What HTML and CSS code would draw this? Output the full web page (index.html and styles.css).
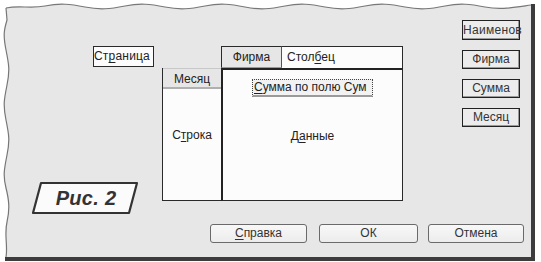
FILE: index.html
```html
<!DOCTYPE html>
<html lang="ru">
<head>
<meta charset="utf-8">
<title>Макет сводной таблицы</title>
<link rel="stylesheet" href="styles.css">
</head>
<body>
<div class="sheet">
  <svg class="paper" width="541" height="262" viewBox="0 0 541 262" aria-hidden="true">
    <path class="paper-fill" d="M6 8 C 20 5, 30 9, 45 6 S 70 4, 85 7 S 110 9, 125 6 S 150 4, 165 7 S 190 9, 205 6 S 230 4, 245 7 S 270 9, 285 6 S 310 4, 325 7 S 350 9, 365 6 S 390 4, 405 7 S 430 9, 445 6 S 470 4, 485 7 S 510 8, 531 5 L 531 257 L 6 257 C 8 245, 4 235, 7 222 S 9 200, 6 188 S 4 170, 7 155 S 9 135, 6 120 S 4 100, 7 85 S 9 65, 6 50 S 4 30, 7 20 Z"/>
    <path class="paper-edge" d="M6 8 C 20 5, 30 9, 45 6 S 70 4, 85 7 S 110 9, 125 6 S 150 4, 165 7 S 190 9, 205 6 S 230 4, 245 7 S 270 9, 285 6 S 310 4, 325 7 S 350 9, 365 6 S 390 4, 405 7 S 430 9, 445 6 S 470 4, 485 7 S 510 8, 531 5"/>
    <path class="paper-edge" d="M6 257 C 8 245, 4 235, 7 222 S 9 200, 6 188 S 4 170, 7 155 S 9 135, 6 120 S 4 100, 7 85 S 9 65, 6 50 S 4 30, 7 20 L 6 8"/>
    <rect class="bar" x="531" y="4" width="4" height="257"/>
    <rect class="bar" x="5" y="257" width="530" height="4"/>
  </svg>

  <div class="content">
    <div class="top">
      <div class="page-field">Ст<u>р</u>аница</div>

      <div class="pivot">
        <div class="col-area">
          <div class="field field-firm">Фирма</div>
          <div class="col-label">Стол<u>б</u>ец</div>
        </div>
        <div class="row-area">
          <div class="field field-month">Месяц</div>
          <div class="area-label row-label">С<u>т</u>рока</div>
        </div>
        <div class="data-area">
          <div class="data-field"><u>С</u>умма по полю Сум</div>
          <div class="area-label data-label">Д<u>а</u>нные</div>
        </div>
      </div>

      <div class="field-list">
        <div class="list-btn list-btn-left">Наименов</div>
        <div class="list-btn">Фирма</div>
        <div class="list-btn">Сумма</div>
        <div class="list-btn">Месяц</div>
      </div>
    </div>

    <div class="actions">
      <div class="btn btn-help"><u>С</u>правка</div>
      <div class="btn btn-ok">ОК</div>
      <div class="btn btn-cancel">Отмена</div>
    </div>
  </div>

  <div class="caption">
    <svg class="caption-frame" width="110" height="34" viewBox="0 0 110 34" aria-hidden="true">
      <path d="M11 2 L107 2 L99 32 L3 32 Z"/>
    </svg>
    <span class="caption-text">Рис. 2</span>
  </div>
</div>
</body>
</html>
```

FILE: styles.css
```css
* { box-sizing: border-box; }

html, body {
  margin: 0;
  padding: 0;
  background: #ffffff;
}

.sheet {
  position: relative;
  width: 541px;
  height: 262px;
  overflow: hidden;
  font-family: "Liberation Sans", Arial, sans-serif;
  font-size: 12px;
  color: #222;
}

.paper {
  position: absolute;
  left: 0;
  top: 0;
  z-index: 0;
}

.paper-fill { fill: #e7e7e7; }
.paper-edge { fill: none; stroke: #777; stroke-width: 1.2; }
.bar { fill: #3c3c3c; }

.content {
  position: relative;
  z-index: 1;
  padding: 20px 0 0 93px;
}

u { text-decoration-thickness: 1px; text-underline-offset: 2px; }

.top {
  display: flex;
  align-items: flex-start;
}

.page-field {
  margin-top: 26px;
  width: 61px;
  height: 21px;
  border: 1px solid #2a2a2a;
  background: #fcfcfc;
  line-height: 19px;
  padding-left: 0;
  white-space: nowrap;
  letter-spacing: 0.2px;
}

.pivot {
  margin-left: 8px;
  margin-top: 26px;
  display: grid;
  grid-template-columns: 59px 182px;
  grid-template-rows: 22px 133px;
}

.col-area {
  grid-column: 2;
  grid-row: 1;
  display: flex;
}

.field {
  background: #e6e6e6;
  text-align: center;
  white-space: nowrap;
}

.field-firm {
  width: 61px;
  height: 22px;
  line-height: 20px;
  border-top: 1px solid #2a2a2a;
  border-left: 1px solid #2a2a2a;
  border-right: 1px solid #555;
  border-bottom: 1px solid #999;
}

.col-label {
  flex: 1;
  height: 22px;
  background: #fcfcfc;
  border-top: 1px solid #2a2a2a;
  border-right: 1px solid #2a2a2a;
  line-height: 21px;
  padding-left: 5px;
}

.row-area {
  grid-column: 1;
  grid-row: 2;
  display: flex;
  flex-direction: column;
  background: #fcfcfc;
  border-left: 1px solid #2a2a2a;
  border-bottom: 1px solid #2a2a2a;
}

.field-month {
  height: 21px;
  line-height: 20px;
  border-top: 1px solid #c8c8c8;
  border-bottom: 2px solid #b0b0b0;
}

.area-label {
  text-align: center;
  line-height: 14px;
}

.row-label { margin-top: 39px; }

.data-area {
  grid-column: 2;
  grid-row: 2;
  display: flex;
  flex-direction: column;
  align-items: center;
  background: #fcfcfc;
  border-top: 2px solid #222;
  border-left: 2px solid #222;
  border-right: 1px solid #2a2a2a;
  border-bottom: 1px solid #2a2a2a;
}

.data-field {
  margin-top: 9px;
  width: 121px;
  height: 18px;
  line-height: 15px;
  background: #f2f2f2;
  border: 1px dotted #444;
  border-bottom: 2px solid #9a9a9a;
  white-space: nowrap;
  text-align: left;
  padding-left: 1px;
}

.data-label { margin-top: 32px; }

.field-list {
  margin-left: 59px;
  display: flex;
  flex-direction: column;
  gap: 10px;
}

.list-btn {
  width: 58px;
  height: 19px;
  line-height: 16px;
  background: #ececec;
  border: 1px solid #222;
  box-shadow: inset -1px -1px 0 #9a9a9a;
  text-align: center;
  white-space: nowrap;
  color: #333;
}

.list-btn-left {
  height: 20px;
  text-align: left;
  line-height: 18px;
  padding-left: 0;
  letter-spacing: 0.3px;
}

.actions {
  display: flex;
  margin-top: 23px;
  margin-left: 117px;
}

.btn {
  height: 19px;
  line-height: 17px;
  text-align: center;
  border: 1px solid #6a6a6a;
  border-radius: 3px;
  background: linear-gradient(#f8f8f8, #ececec);
  color: #333;
}

.btn-help { width: 97px; }
.btn-ok { width: 99px; margin-left: 12px; }
.btn-cancel { width: 96px; margin-left: 10px; }

.caption {
  position: absolute;
  left: 30px;
  top: 181px;
  width: 110px;
  height: 34px;
  z-index: 2;
  display: flex;
  align-items: center;
  justify-content: center;
}

.caption-frame {
  position: absolute;
  left: 0;
  top: 0;
}

.caption-frame path {
  fill: #fbfbfb;
  stroke: #333;
  stroke-width: 2.2;
  stroke-linejoin: round;
}

.caption-text {
  position: relative;
  font-family: "Liberation Sans", Arial, sans-serif;
  font-weight: bold;
  font-style: italic;
  font-size: 20px;
  color: #333;
  letter-spacing: 0.3px;
  padding-left: 2px;
}
```
